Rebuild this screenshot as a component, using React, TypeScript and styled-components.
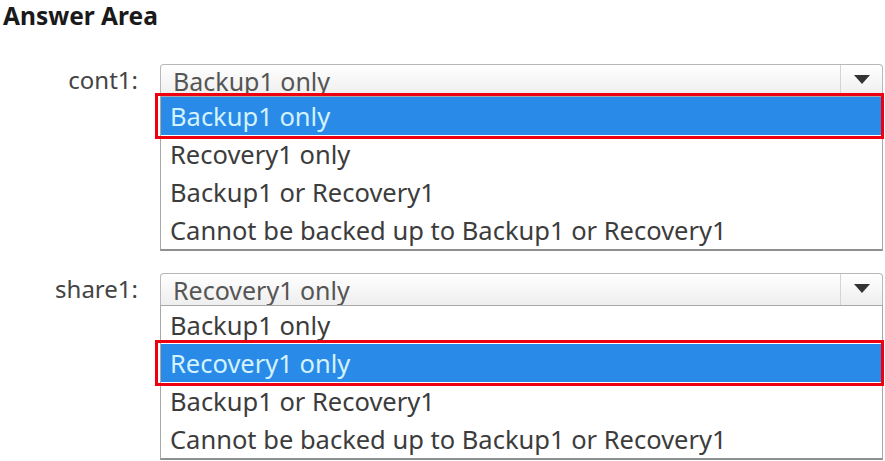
import React from "react";
import styled, { createGlobalStyle } from "styled-components";

const GlobalStyle = createGlobalStyle`
  body {
    margin: 0;
    background: #ffffff;
    font-family: "Noto Sans", "Open Sans", sans-serif;
  }
`;

interface Question {
  label: string;
  value: string;
  options: string[];
}

const OPTIONS = [
  "Backup1 only",
  "Recovery1 only",
  "Backup1 or Recovery1",
  "Cannot be backed up to Backup1 or Recovery1",
];

const QUESTIONS: Question[] = [
  { label: "cont1:", value: "Backup1 only", options: OPTIONS },
  { label: "share1:", value: "Recovery1 only", options: OPTIONS },
];

export default function App() {
  return <Page>
    <GlobalStyle/>
    <Title>Answer Area</Title>
    <Form>
      {QUESTIONS.map(q => (
        <Field key={q.label}>
          <FieldLabel>{q.label}</FieldLabel>
          <Dropdown>
            <Header>
              <HeaderText>{q.value}</HeaderText>
              <ArrowButton>
                <svg width="16" height="9" viewBox="0 0 16 9">
                  <path d="M0 0 H16 L8 9 Z" fill="#333"/>
                </svg>
              </ArrowButton>
            </Header>
            <OptionList>
              {q.options.map(opt => (
                <OptionRow key={opt} selected={opt === q.value}>
                  {opt}
                  {opt === q.value && <Marker/>}
                </OptionRow>
              ))}
            </OptionList>
          </Dropdown>
        </Field>
      ))}
    </Form>
  </Page>;
}

const Page = styled.div`
  width: 885px;
  height: 461px;
  padding: 0 2px 0 3px;
  box-sizing: border-box;
  overflow: hidden;
`;

const Title = styled.h1`
  margin: 0;
  font-size: 24.5px;
  font-weight: 700;
  line-height: 32px;
  color: #1a1a1a;
`;

const Form = styled.div`
  display: flex;
  flex-direction: column;
  gap: 22px;
  margin-top: 32px;
`;

const Field = styled.div`
  display: grid;
  grid-template-columns: 135px 1fr;
  column-gap: 22px;
  align-items: start;
`;

const FieldLabel = styled.span`
  text-align: right;
  font-size: 24px;
  line-height: 32px;
  color: #444;
`;

const Dropdown = styled.div`
  display: flex;
  flex-direction: column;
`;

const Header = styled.div`
  display: flex;
  height: 31px;
  border: 1px solid #b8b8b8;
  border-bottom: none;
  border-radius: 4px 4px 0 0;
  background: linear-gradient(#ffffff, #eeeeee);
  overflow: hidden;
`;

const HeaderText = styled.span`
  flex: 1;
  padding: 1px 0 0 12px;
  font-size: 25px;
  line-height: 30px;
  color: #555;
  white-space: nowrap;
`;

const ArrowButton = styled.span`
  width: 42px;
  display: flex;
  justify-content: center;
  padding-top: 10px;
  box-sizing: border-box;
  border-left: 1px solid #d4d4d4;
`;

const OptionList = styled.div`
  border: 1px solid #a8a8a8;
  border-bottom: 2px solid #909090;
  background: #fff;
`;

const OptionRow = styled.div<{ selected?: boolean }>`
  position: relative;
  height: 38px;
  padding-left: 9px;
  font-size: 25.5px;
  line-height: 38px;
  white-space: nowrap;
  color: ${p => p.selected ? "#d2f3ff" : "#3c3c3c"};
  background: ${p => p.selected ? "#2a8ae8" : "transparent"};
`;

const Marker = styled.span`
  position: absolute;
  top: -4px;
  bottom: -4px;
  left: -6px;
  right: -2px;
  border: 3px solid #ee0010;
`;
